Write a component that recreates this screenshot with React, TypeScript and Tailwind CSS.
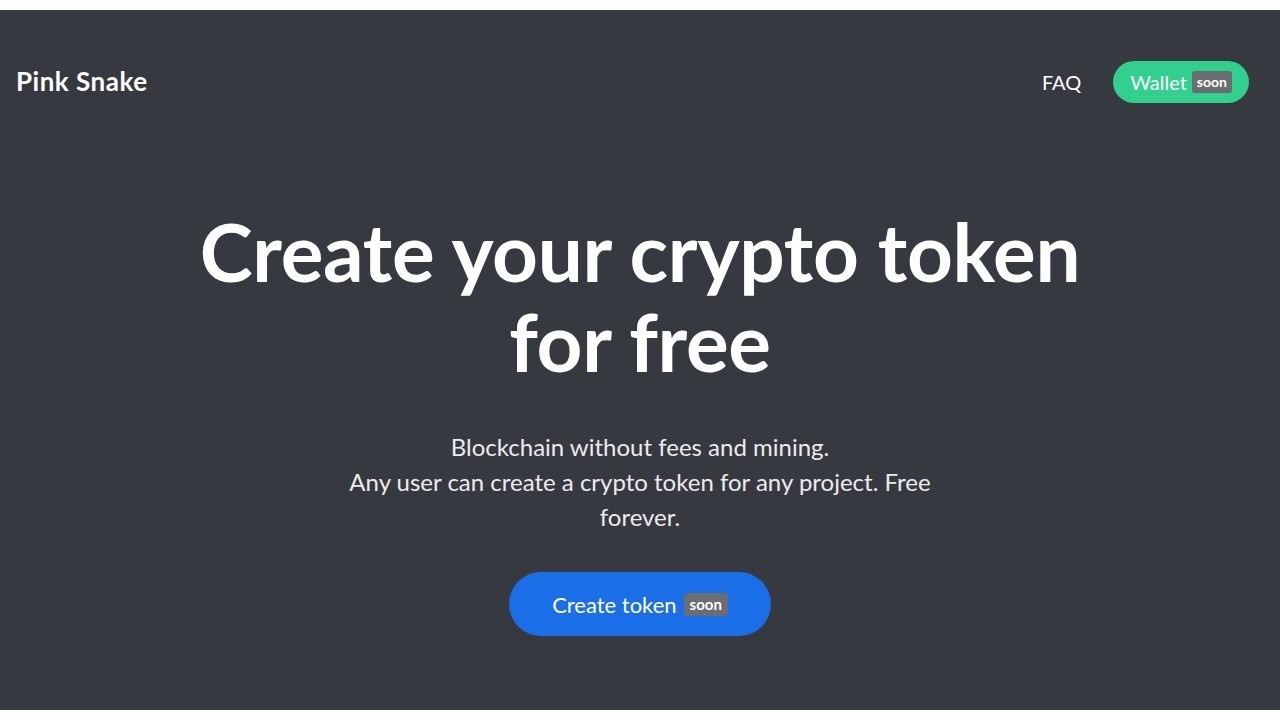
const font = { fontFamily: "Lato, 'Open Sans', sans-serif" };

function Soon({ className = "" }: { className?: string }) {
  return (
    <span
      className={`inline-block bg-[#6b6d70] text-white font-bold leading-none rounded-[3px] ${className}`}
    >
      soon
    </span>
  );
}

export default function App() {
  return (
    <div className="bg-white py-[10px]" style={font}>
      <div className="bg-[#36393f] h-[700px] flex flex-col text-white">
        <header className="flex items-center justify-between pl-4 pr-[31px] pt-[51px]">
          <div className="text-[26px] font-bold tracking-[0.5px] -mt-[2px]">Pink Snake</div>
          <nav className="flex items-center gap-8">
            <a href="#" className="text-[20px] text-white">
              FAQ
            </a>
            <button className="h-[42px] px-[17px] rounded-full bg-[#31d08e] flex items-center gap-[5px] text-[20px] text-white">
              Wallet
              <Soon className="text-[14px] px-[5px] py-[4px]" />
            </button>
          </nav>
        </header>

        <main className="flex flex-col items-center text-center mt-[103px]">
          <h1 className="text-[80px] font-bold leading-[90px] tracking-[-0.3px]">
            Create your crypto token
            <br />
            for free
          </h1>
          <p className="mt-[43px] text-[24px] leading-[35px] text-[#ececec]">
            Blockchain without fees and mining.
            <br />
            Any user can create a crypto token for any project. Free
            <br />
            forever.
          </p>
          <button className="mt-[38px] w-[262px] h-[64px] rounded-full bg-[#1a6ee8] flex items-center justify-center gap-[7px] text-[22px] text-white">
            Create token
            <Soon className="text-[15px] px-[6px] py-[4px]" />
          </button>
        </main>
      </div>
    </div>
  );
}
